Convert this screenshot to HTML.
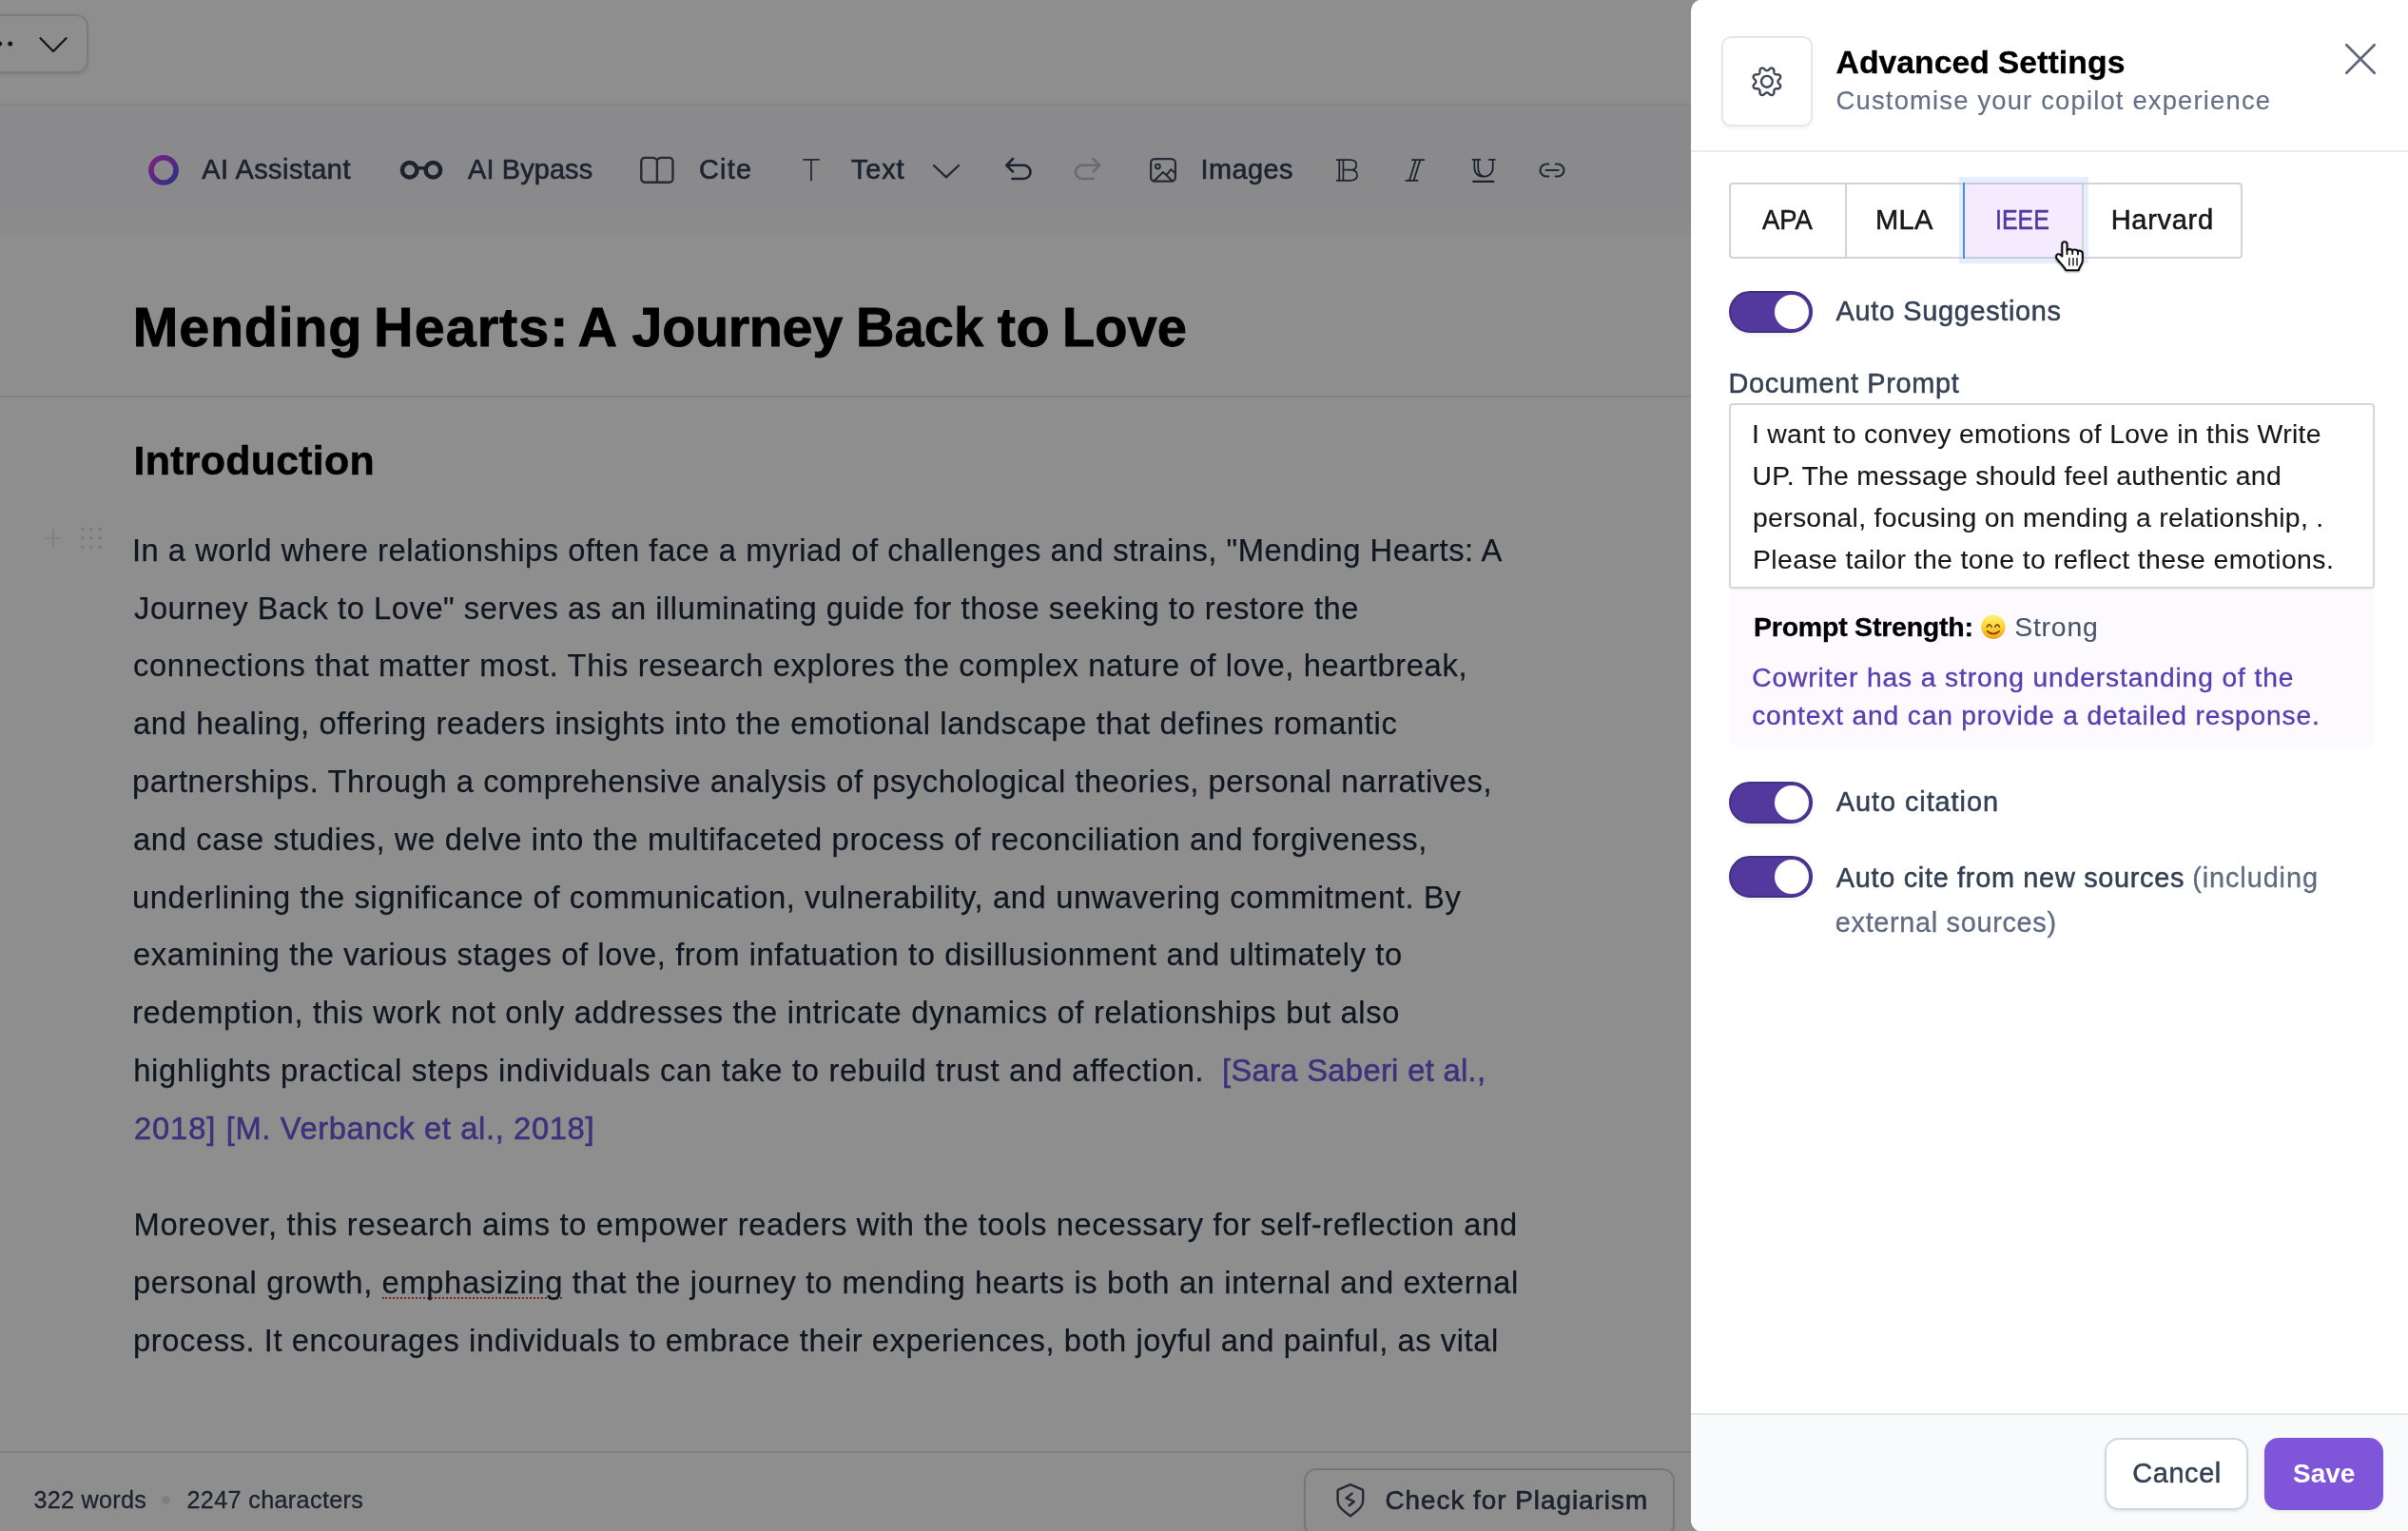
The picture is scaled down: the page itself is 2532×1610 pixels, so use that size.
<!DOCTYPE html>
<html><head><meta charset="utf-8"><title>Advanced Settings</title>
<style>
html,body{margin:0;padding:0;overflow:hidden;}
body{width:2532px;height:1610px;overflow:hidden;position:relative;background:#fff;font-family:"Liberation Sans",sans-serif;}
.abs{position:absolute;}
.t{position:absolute;white-space:pre;line-height:1;}
#left,#pin{will-change:transform;}
#left{position:absolute;left:0;top:0;width:2532px;height:1610px;overflow:hidden;background:#fff;}
#ov{position:absolute;left:0;top:0;width:2532px;height:1610px;background:rgba(0,0,0,0.443);}
#panel{position:absolute;left:1778px;top:-1px;width:754px;height:1612px;background:#fff;border-radius:13px 0 0 13px;overflow:hidden;}
#pin{position:absolute;left:-1778px;top:1px;width:2532px;height:1610px;}
svg{position:absolute;left:0;top:0;overflow:visible;}
#root{position:absolute;left:0;top:0;width:2532px;height:1610px;overflow:hidden;}
</style></head><body>
<div id="root">
<div id="left">

<div class="abs" style="left:0;top:110.5px;width:2532px;height:137.5px;background:linear-gradient(#f8f8fb 0,#f8f8fb 70%,#f9f9fa 100%);"></div>
<div class="abs" style="left:0;top:108.5px;width:2532px;height:2px;background:#f0f1f3;"></div>
<div class="abs" style="left:-20px;top:15px;width:108.5px;height:57.6px;border:2px solid #dcdfe4;border-radius:13px;box-shadow:0 2px 3px rgba(16,24,40,.10);background:#fff;"></div>
<div class="abs" style="left:0;top:416px;width:2532px;height:2px;background:#e8e9ec;"></div>
<div class="abs" style="left:0;top:1526px;width:2532px;height:2px;background:#e8e9ec;"></div>
<div class="abs" style="left:1370.6px;top:1544px;width:386px;height:68px;border:2px solid #d3d6dc;border-radius:13px;box-shadow:0 2px 3px rgba(16,24,40,.08);"></div>
<div class="abs" style="left:170px;top:1573.3px;width:9px;height:9px;border-radius:50%;background:#e2e5ea;"></div>
<div class="abs" style="left:402px;top:1364.2px;width:189px;height:0;border-top:2.4px dotted #e5484d;"></div>
<svg width="2532" height="1610" viewBox="0 0 2532 1610" fill="none" stroke-linecap="round" stroke-linejoin="round">
<defs><linearGradient id="aig" x1="0" y1="0" x2="1" y2="1"><stop offset="0" stop-color="#e23be8"/><stop offset="1" stop-color="#4f5bea"/></linearGradient></defs>
<!-- dropdown dots + chevron -->
<circle cx="-0.3" cy="45.9" r="2.5" fill="#1d2939"/><circle cx="10.7" cy="45.9" r="2.5" fill="#1d2939"/>
<path d="M42.5 40.3 L56 54 L69.5 40.3" stroke="#1d2939" stroke-width="2.3"/>
<!-- AI assistant ring -->
<circle cx="172" cy="178.9" r="13.1" stroke="url(#aig)" stroke-width="5.6"/>
<!-- glasses -->
<g stroke="#344054" stroke-width="4.5"><circle cx="430.7" cy="178.8" r="7.75"/><circle cx="455.4" cy="178.8" r="7.75"/><path d="M439 176.7 H447" stroke-width="3.4"/></g>
<!-- book -->
<g stroke="#414b5c" stroke-width="2.35"><path d="M690.9 169.6 C690.9 167.2 688.6 165.9 686.4 165.9 H678 a3.7 3.7 0 0 0 -3.7 3.7 V188 a3.7 3.7 0 0 0 3.7 3.7 H703.8 a3.7 3.7 0 0 0 3.7 -3.7 V169.6 a3.7 3.7 0 0 0 -3.7 -3.7 H695.4 C693.2 165.9 690.9 167.2 690.9 169.6 V191.7"/></g>
<!-- T -->
<path d="M845 167.9 H861 M853 167.9 V189.6" stroke="#414b5c" stroke-width="1.8"/>
<!-- text chevron -->
<path d="M982 174 L995 186.4 L1008 174" stroke="#414b5c" stroke-width="2.4"/>
<!-- undo -->
<path d="M1065 167 L1058.3 173.8 L1065 180.5 M1058.8 173.8 H1076.4 a7.1 7.1 0 0 1 0 14.2 H1064.4" stroke="#344054" stroke-width="2.6"/>
<!-- redo -->
<path d="M1149.5 167 L1156.2 173.8 L1149.5 180.5 M1155.7 173.8 H1138.1 a7.1 7.1 0 0 0 0 14.2 H1149.6" stroke="#bcc1cc" stroke-width="2.6"/>
<!-- image -->
<g stroke="#414b5c" stroke-width="2.2"><rect x="1210.1" y="167.1" width="25.8" height="23.6" rx="4.2"/><circle cx="1217.4" cy="175.1" r="2.45" stroke-width="2"/><path d="M1213.6 190 L1223 180.9 L1232 189.4 M1226.6 184.2 L1231.3 178.2 L1236 182.2" stroke-width="2.1"/></g>
<!-- B -->
<g stroke="#344054" stroke-width="1.75"><path d="M1405.6 168.1 H1419.5 c4.3 0 6.8 2.1 6.8 5.3 c0 3.2 -2.5 5.3 -6.8 5.3 H1412.4 M1419.5 178.7 c4.8 0 7.6 2.2 7.6 5.6 c0 3.4 -2.8 5.6 -7.6 5.6 H1405.6 M1408.3 168.1 V189.9 M1412.4 168.1 V189.9"/></g>
<!-- I -->
<g stroke="#344054" stroke-width="1.8"><path d="M1484.9 168.1 H1497.4 M1478.2 189.8 H1490.7 M1488.8 168.1 L1482 189.8 M1493.3 168.1 L1486.6 189.8"/></g>
<!-- U -->
<g stroke="#344054" stroke-width="1.75"><path d="M1548.5 167.9 H1556.4 M1565.6 167.9 H1571.8 M1550.4 167.9 V176.5 c0 5.6 3.8 9.3 9.5 9.3 c5.8 0 9.8 -3.7 9.8 -9.3 V167.9 M1554.2 167.9 V176 c0 5.2 2.2 8.8 6 9.7"/><path d="M1549.2 190.8 H1570.4" stroke-width="2.2"/></g>
<!-- link -->
<g stroke="#414b5c" stroke-width="2.2"><path d="M1628.2 172.5 h-2.2 a6.5 6.5 0 0 0 0 13 h2.2 M1635.8 172.5 h2.2 a6.5 6.5 0 0 1 0 13 h-2.2 M1625.6 179 H1638.6"/></g>
<!-- plus + grid -->
<path d="M47.6 566 H64.2 M55.9 556.6 V575.4" stroke="#dfe2e7" stroke-width="1.7" stroke-linecap="butt"/>
<g fill="#d9dce2"><circle cx="86.7" cy="556.5" r="1.7"/><circle cx="86.7" cy="566" r="1.7"/><circle cx="86.7" cy="575.5" r="1.7"/><circle cx="95.9" cy="556.5" r="1.7"/><circle cx="95.9" cy="566" r="1.7"/><circle cx="95.9" cy="575.5" r="1.7"/><circle cx="105.2" cy="556.5" r="1.7"/><circle cx="105.2" cy="566" r="1.7"/><circle cx="105.2" cy="575.5" r="1.7"/></g>
<!-- shield -->
<g stroke="#414b5c" stroke-width="2.4"><path d="M1419.9 1561.2 L1432.2 1566.3 a1.8 1.8 0 0 1 1 1.6 V1578 c0 5.6 -3.4 9.2 -13.3 16.3 c-9.9 -7.1 -13.3 -10.7 -13.3 -16.3 V1567.9 a1.8 1.8 0 0 1 1 -1.6 Z"/><path d="M1421.6 1570.6 L1415.6 1575.4 L1423.9 1579 L1418.6 1583.3"/></g>
</svg>

<span class="t" style="left:212.30px;top:164.14px;font-size:28.9px;letter-spacing:0.472px;color:#344054;-webkit-text-stroke:0.6px #344054;">AI Assistant</span>
<span class="t" style="left:492.00px;top:164.14px;font-size:28.9px;letter-spacing:0.135px;color:#344054;-webkit-text-stroke:0.6px #344054;">AI Bypass</span>
<span class="t" style="left:735.00px;top:164.14px;font-size:28.9px;letter-spacing:1.230px;color:#344054;-webkit-text-stroke:0.6px #344054;">Cite</span>
<span class="t" style="left:895.00px;top:164.14px;font-size:28.9px;letter-spacing:0.814px;color:#344054;-webkit-text-stroke:0.6px #344054;">Text</span>
<span class="t" style="left:1262.40px;top:164.14px;font-size:28.9px;letter-spacing:0.461px;color:#344054;-webkit-text-stroke:0.6px #344054;">Images</span>
<span class="t" style="left:139.50px;top:316.24px;font-size:57.6px;letter-spacing:0.692px;color:#000;font-weight:700;-webkit-text-stroke:0.8px #000;">Mending</span>
<span class="t" style="left:393.10px;top:316.24px;font-size:57.6px;letter-spacing:0.970px;color:#000;font-weight:700;-webkit-text-stroke:0.8px #000;">Hearts:</span>
<span class="t" style="left:607.40px;top:316.24px;font-size:57.6px;letter-spacing:0.000px;color:#000;font-weight:700;-webkit-text-stroke:0.8px #000;">A</span>
<span class="t" style="left:664.50px;top:316.24px;font-size:57.6px;letter-spacing:-0.386px;color:#000;font-weight:700;-webkit-text-stroke:0.8px #000;">Journey</span>
<span class="t" style="left:899.90px;top:316.24px;font-size:57.6px;color:#000;transform-origin:0 50%;transform:scaleX(0.9738);font-weight:700;-webkit-text-stroke:0.8px #000;">Back</span>
<span class="t" style="left:1048.70px;top:316.24px;font-size:57.6px;letter-spacing:0.621px;color:#000;font-weight:700;-webkit-text-stroke:0.8px #000;">to</span>
<span class="t" style="left:1116.70px;top:316.24px;font-size:57.6px;color:#000;transform-origin:0 50%;transform:scaleX(0.9748);font-weight:700;-webkit-text-stroke:0.8px #000;">Love</span>
<span class="t" style="left:140.50px;top:462.99px;font-size:42.9px;letter-spacing:0.278px;color:#000;font-weight:700;-webkit-text-stroke:0.5px #000;">Introduction</span>
<span class="t" style="left:138.90px;top:562.92px;font-size:32.7px;letter-spacing:0.543px;color:#1d2939;-webkit-text-stroke:0.25px #1d2939;">In a world where relationships often face a myriad of challenges and strains, "Mending Hearts: A</span>
<span class="t" style="left:141.00px;top:623.70px;font-size:32.7px;letter-spacing:0.538px;color:#1d2939;-webkit-text-stroke:0.25px #1d2939;">Journey Back to Love" serves as an illuminating guide for those seeking to restore the</span>
<span class="t" style="left:140.00px;top:684.48px;font-size:32.7px;letter-spacing:0.644px;color:#1d2939;-webkit-text-stroke:0.25px #1d2939;">connections that matter most. This research explores the complex nature of love, heartbreak,</span>
<span class="t" style="left:140.00px;top:745.26px;font-size:32.7px;letter-spacing:0.631px;color:#1d2939;-webkit-text-stroke:0.25px #1d2939;">and healing, offering readers insights into the emotional landscape that defines romantic</span>
<span class="t" style="left:139.00px;top:806.04px;font-size:32.7px;letter-spacing:0.568px;color:#1d2939;-webkit-text-stroke:0.25px #1d2939;">partnerships. Through a comprehensive analysis of psychological theories, personal narratives,</span>
<span class="t" style="left:140.00px;top:866.82px;font-size:32.7px;letter-spacing:0.640px;color:#1d2939;-webkit-text-stroke:0.25px #1d2939;">and case studies, we delve into the multifaceted process of reconciliation and forgiveness,</span>
<span class="t" style="left:139.00px;top:927.60px;font-size:32.7px;letter-spacing:0.628px;color:#1d2939;-webkit-text-stroke:0.25px #1d2939;">underlining the significance of communication, vulnerability, and unwavering commitment. By</span>
<span class="t" style="left:140.00px;top:988.38px;font-size:32.7px;letter-spacing:0.612px;color:#1d2939;-webkit-text-stroke:0.25px #1d2939;">examining the various stages of love, from infatuation to disillusionment and ultimately to</span>
<span class="t" style="left:139.00px;top:1049.16px;font-size:32.7px;letter-spacing:0.689px;color:#1d2939;-webkit-text-stroke:0.25px #1d2939;">redemption, this work not only addresses the intricate dynamics of relationships but also</span>
<span class="t" style="left:140.20px;top:1109.94px;font-size:32.7px;letter-spacing:0.692px;color:#1d2939;-webkit-text-stroke:0.25px #1d2939;">highlights practical steps individuals can take to rebuild trust and affection.</span>
<span class="t" style="left:1285.00px;top:1109.94px;font-size:32.7px;letter-spacing:0.335px;color:#7059de;-webkit-text-stroke:0.6px #7059de;">[Sara Saberi et al.,</span>
<span class="t" style="left:141.00px;top:1170.72px;font-size:32.7px;letter-spacing:0.871px;color:#7059de;-webkit-text-stroke:0.6px #7059de;">2018]</span>
<span class="t" style="left:237.70px;top:1170.72px;font-size:32.7px;letter-spacing:0.644px;color:#7059de;-webkit-text-stroke:0.6px #7059de;">[M. Verbanck et al., 2018]</span>
<span class="t" style="left:140.50px;top:1272.32px;font-size:32.7px;letter-spacing:0.664px;color:#1d2939;-webkit-text-stroke:0.25px #1d2939;">Moreover, this research aims to empower readers with the tools necessary for self-reflection and</span>
<span class="t" style="left:140.00px;top:1333.10px;font-size:32.7px;letter-spacing:0.639px;color:#1d2939;-webkit-text-stroke:0.25px #1d2939;">personal growth, emphasizing that the journey to mending hearts is both an internal and external</span>
<span class="t" style="left:140.00px;top:1393.88px;font-size:32.7px;letter-spacing:0.579px;color:#1d2939;-webkit-text-stroke:0.25px #1d2939;">process. It encourages individuals to embrace their experiences, both joyful and painful, as vital</span>
<span class="t" style="left:35.50px;top:1565.07px;font-size:25.2px;letter-spacing:0.273px;color:#344054;-webkit-text-stroke:0.3px #344054;">322 words</span>
<span class="t" style="left:196.50px;top:1565.07px;font-size:25.2px;letter-spacing:0.341px;color:#344054;-webkit-text-stroke:0.3px #344054;">2247 characters</span>
<span class="t" style="left:1456.50px;top:1563.77px;font-size:27.8px;letter-spacing:1.007px;color:#344054;-webkit-text-stroke:0.65px #344054;">Check for Plagiarism</span>
</div>
<div id="ov"></div>
<div id="panel"><div id="pin">

<div class="abs" style="left:1810.4px;top:38.3px;width:91.2px;height:91.2px;border:2px solid #e6e7ea;border-radius:10px;box-shadow:0 2px 4px rgba(16,24,40,.06);"></div>
<div class="abs" style="left:1778px;top:157.7px;width:760px;height:2px;background:#eaecf0;"></div>
<!-- tabs -->
<div class="abs" style="left:2060.4px;top:186.1px;width:135.4px;height:91.3px;background:#e4eefc;"></div>
<div class="abs" style="left:1818.4px;top:192.3px;width:535.9px;height:75.4px;border:2px solid #d2d4d8;border-radius:4px;"></div>
<div class="abs" style="left:2066px;top:194px;width:122.6px;height:76px;background:#f4ebff;"></div>
<div class="abs" style="left:2064px;top:192px;width:2px;height:80px;background:#4a90e2;"></div>
<div class="abs" style="left:2066px;top:192px;width:124px;height:2px;background:#c9cbdb;"></div>
<div class="abs" style="left:2066px;top:270px;width:124px;height:2px;background:#c9cbdb;"></div>
<div class="abs" style="left:1940.2px;top:194px;width:2px;height:76px;background:#d2d4d8;"></div>
<div class="abs" style="left:2188.6px;top:194px;width:2px;height:76px;background:#d2d4d8;"></div>
<div class="abs" style="left:1818.1px;top:305.9px;width:83.7px;height:40px;border:2px solid #42307d;border-radius:24px;background:#53389e;box-shadow:0 2px 4px rgba(16,24,40,.08);"></div><div class="abs" style="left:1865.6px;top:309.7px;width:36.4px;height:36.4px;border-radius:50%;background:#fff;"></div><div class="abs" style="left:1818.1px;top:822px;width:83.7px;height:40px;border:2px solid #42307d;border-radius:24px;background:#53389e;box-shadow:0 2px 4px rgba(16,24,40,.08);"></div><div class="abs" style="left:1865.6px;top:825.8px;width:36.4px;height:36.4px;border-radius:50%;background:#fff;"></div><div class="abs" style="left:1818.1px;top:900.2px;width:83.7px;height:40px;border:2px solid #42307d;border-radius:24px;background:#53389e;box-shadow:0 2px 4px rgba(16,24,40,.08);"></div><div class="abs" style="left:1865.6px;top:904.0px;width:36.4px;height:36.4px;border-radius:50%;background:#fff;"></div>
<!-- textarea -->
<div class="abs" style="left:1818.7px;top:619px;width:678.7px;height:166.9px;background:#fcfaff;border-radius:0 0 8px 8px;"></div>
<div class="abs" style="left:1818px;top:424.2px;width:675.4px;height:191px;border:2px solid #d5d6d9;border-radius:4px;background:#fff;box-shadow:0 1px 2px rgba(16,24,40,.05);"></div>
<!-- footer -->
<div class="abs" style="left:1778px;top:1486px;width:760px;height:2px;background:#e4e7ec;"></div>
<div class="abs" style="left:1778px;top:1488px;width:760px;height:130px;background:#f9fafb;"></div>
<div class="abs" style="left:2212.6px;top:1512.3px;width:147.6px;height:72.2px;border:2px solid #d5d7dc;border-radius:15px;background:#fff;box-shadow:0 2px 3px rgba(16,24,40,.08);"></div>
<div class="abs" style="left:2380.8px;top:1512px;width:125.2px;height:75.9px;border-radius:15px;background:#7f56d9;box-shadow:0 2px 3px rgba(16,24,40,.08);"></div>
<svg width="2532" height="1610" viewBox="0 0 2532 1610" fill="none" stroke-linecap="round" stroke-linejoin="round">
<defs><linearGradient id="emg" x1="0" y1="0" x2="0" y2="1"><stop offset="0" stop-color="#fff27a"/><stop offset="0.45" stop-color="#fdd835"/><stop offset="1" stop-color="#f59e1c"/></linearGradient></defs>
<path d="M1869.50,85.80 L1869.51,86.09 L1869.56,86.37 L1869.64,86.67 L1869.78,86.97 L1869.98,87.29 L1870.27,87.63 L1870.63,88.01 L1871.04,88.41 L1871.44,88.84 L1871.77,89.27 L1872.00,89.70 L1872.12,90.12 L1872.17,90.51 L1872.14,90.90 L1872.07,91.26 L1871.94,91.62 L1871.78,91.95 L1871.58,92.27 L1871.32,92.56 L1871.01,92.81 L1870.63,93.01 L1870.16,93.15 L1869.62,93.22 L1869.04,93.24 L1868.47,93.24 L1867.94,93.25 L1867.50,93.29 L1867.13,93.37 L1866.81,93.49 L1866.55,93.64 L1866.31,93.81 L1866.10,94.00 L1865.91,94.21 L1865.74,94.45 L1865.59,94.71 L1865.47,95.03 L1865.39,95.40 L1865.35,95.84 L1865.34,96.37 L1865.34,96.94 L1865.32,97.52 L1865.25,98.06 L1865.11,98.53 L1864.91,98.91 L1864.66,99.22 L1864.37,99.48 L1864.05,99.68 L1863.72,99.84 L1863.36,99.97 L1863.00,100.04 L1862.61,100.07 L1862.22,100.02 L1861.80,99.90 L1861.37,99.67 L1860.94,99.34 L1860.51,98.94 L1860.11,98.53 L1859.73,98.17 L1859.39,97.88 L1859.07,97.68 L1858.77,97.54 L1858.47,97.46 L1858.19,97.41 L1857.90,97.40 L1857.61,97.41 L1857.33,97.46 L1857.03,97.54 L1856.73,97.68 L1856.41,97.88 L1856.07,98.17 L1855.69,98.53 L1855.29,98.94 L1854.86,99.34 L1854.43,99.67 L1854.00,99.90 L1853.58,100.02 L1853.19,100.07 L1852.80,100.04 L1852.44,99.97 L1852.08,99.84 L1851.75,99.68 L1851.43,99.48 L1851.14,99.22 L1850.89,98.91 L1850.69,98.53 L1850.55,98.06 L1850.48,97.52 L1850.46,96.94 L1850.46,96.37 L1850.45,95.84 L1850.41,95.40 L1850.33,95.03 L1850.21,94.71 L1850.06,94.45 L1849.89,94.21 L1849.70,94.00 L1849.49,93.81 L1849.25,93.64 L1848.99,93.49 L1848.67,93.37 L1848.30,93.29 L1847.86,93.25 L1847.33,93.24 L1846.76,93.24 L1846.18,93.22 L1845.64,93.15 L1845.17,93.01 L1844.79,92.81 L1844.48,92.56 L1844.22,92.27 L1844.02,91.95 L1843.86,91.62 L1843.73,91.26 L1843.66,90.90 L1843.63,90.51 L1843.68,90.12 L1843.80,89.70 L1844.03,89.27 L1844.36,88.84 L1844.76,88.41 L1845.17,88.01 L1845.53,87.63 L1845.82,87.29 L1846.02,86.97 L1846.16,86.67 L1846.24,86.37 L1846.29,86.09 L1846.30,85.80 L1846.29,85.51 L1846.24,85.23 L1846.16,84.93 L1846.02,84.63 L1845.82,84.31 L1845.53,83.97 L1845.17,83.59 L1844.76,83.19 L1844.36,82.76 L1844.03,82.33 L1843.80,81.90 L1843.68,81.48 L1843.63,81.09 L1843.66,80.70 L1843.73,80.34 L1843.86,79.98 L1844.02,79.65 L1844.22,79.33 L1844.48,79.04 L1844.79,78.79 L1845.17,78.59 L1845.64,78.45 L1846.18,78.38 L1846.76,78.36 L1847.33,78.36 L1847.86,78.35 L1848.30,78.31 L1848.67,78.23 L1848.99,78.11 L1849.25,77.96 L1849.49,77.79 L1849.70,77.60 L1849.89,77.39 L1850.06,77.15 L1850.21,76.89 L1850.33,76.57 L1850.41,76.20 L1850.45,75.76 L1850.46,75.23 L1850.46,74.66 L1850.48,74.08 L1850.55,73.54 L1850.69,73.07 L1850.89,72.69 L1851.14,72.38 L1851.43,72.12 L1851.75,71.92 L1852.08,71.76 L1852.44,71.63 L1852.80,71.56 L1853.19,71.53 L1853.58,71.58 L1854.00,71.70 L1854.43,71.93 L1854.86,72.26 L1855.29,72.66 L1855.69,73.07 L1856.07,73.43 L1856.41,73.72 L1856.73,73.92 L1857.03,74.06 L1857.33,74.14 L1857.61,74.19 L1857.90,74.20 L1858.19,74.19 L1858.47,74.14 L1858.77,74.06 L1859.07,73.92 L1859.39,73.72 L1859.73,73.43 L1860.11,73.07 L1860.51,72.66 L1860.94,72.26 L1861.37,71.93 L1861.80,71.70 L1862.22,71.58 L1862.61,71.53 L1863.00,71.56 L1863.36,71.63 L1863.72,71.76 L1864.05,71.92 L1864.37,72.12 L1864.66,72.38 L1864.91,72.69 L1865.11,73.07 L1865.25,73.54 L1865.32,74.08 L1865.34,74.66 L1865.34,75.23 L1865.35,75.76 L1865.39,76.20 L1865.47,76.57 L1865.59,76.89 L1865.74,77.15 L1865.91,77.39 L1866.10,77.60 L1866.31,77.79 L1866.55,77.96 L1866.81,78.11 L1867.13,78.23 L1867.50,78.31 L1867.94,78.35 L1868.47,78.36 L1869.04,78.36 L1869.62,78.38 L1870.16,78.45 L1870.63,78.59 L1871.01,78.79 L1871.32,79.04 L1871.58,79.33 L1871.78,79.65 L1871.94,79.98 L1872.07,80.34 L1872.14,80.70 L1872.17,81.09 L1872.12,81.48 L1872.00,81.90 L1871.77,82.33 L1871.44,82.76 L1871.04,83.19 L1870.63,83.59 L1870.27,83.97 L1869.98,84.31 L1869.78,84.63 L1869.64,84.93 L1869.56,85.23 L1869.51,85.51Z" stroke="#3f4654" stroke-width="2.4"/>
<circle cx="1857.9" cy="85.8" r="5.9" stroke="#3f4654" stroke-width="2.4"/>
<path d="M2467.3 47.3 L2496.7 76.7 M2496.7 47.3 L2467.3 76.7" stroke="#5f677a" stroke-width="2.7"/>
<circle cx="2095.9" cy="659.2" r="12.7" fill="url(#emg)"/>
<g stroke="#6b3d00" stroke-width="1.6"><path d="M2089.4 659.2 q2.3 -4.8 4.6 0 M2097.8 659.2 q2.3 -4.8 4.6 0"/><path d="M2089.6 663.8 q6.3 5.4 12.6 0"/></g>
</svg>

<span class="t" style="left:1930.60px;top:49.27px;font-size:33.7px;letter-spacing:0.025px;color:#000;font-weight:700;-webkit-text-stroke:0.35px #000;">Advanced</span>
<span class="t" style="left:2100.70px;top:49.27px;font-size:33.7px;letter-spacing:0.135px;color:#000;font-weight:700;-webkit-text-stroke:0.35px #000;">Settings</span>
<span class="t" style="left:1930.60px;top:91.81px;font-size:27.4px;letter-spacing:1.180px;color:#667085;-webkit-text-stroke:0.15px #667085;">Customise your copilot experience</span>
<span class="t" style="left:1853.20px;top:216.87px;font-size:29.1px;color:#18181b;transform-origin:0 50%;transform:scaleX(0.9426);-webkit-text-stroke:0.55px #18181b;">APA</span>
<span class="t" style="left:1971.90px;top:216.87px;font-size:29.1px;letter-spacing:0.342px;color:#18181b;-webkit-text-stroke:0.55px #18181b;">MLA</span>
<span class="t" style="left:2097.90px;top:216.87px;font-size:29.1px;color:#53389e;transform-origin:0 50%;transform:scaleX(0.8561);-webkit-text-stroke:0.55px #53389e;">IEEE</span>
<span class="t" style="left:2219.70px;top:216.87px;font-size:29.1px;letter-spacing:0.651px;color:#18181b;-webkit-text-stroke:0.55px #18181b;">Harvard</span>
<span class="t" style="left:1930.60px;top:313.14px;font-size:28.9px;letter-spacing:0.658px;color:#344054;-webkit-text-stroke:0.5px #344054;">Auto Suggestions</span>
<span class="t" style="left:1817.50px;top:389.44px;font-size:28.9px;letter-spacing:0.679px;color:#344054;-webkit-text-stroke:0.5px #344054;">Document Prompt</span>
<span class="t" style="left:1841.90px;top:441.76px;font-size:28.4px;letter-spacing:0.297px;color:#18181b;-webkit-text-stroke:0.1px #18181b;">I want to convey emotions of Love in this Write</span>
<span class="t" style="left:1842.50px;top:485.66px;font-size:28.4px;letter-spacing:0.239px;color:#18181b;-webkit-text-stroke:0.1px #18181b;">UP. The message should feel authentic and</span>
<span class="t" style="left:1843.00px;top:529.96px;font-size:28.4px;letter-spacing:0.284px;color:#18181b;-webkit-text-stroke:0.1px #18181b;">personal, focusing on mending a relationship, .</span>
<span class="t" style="left:1843.00px;top:573.86px;font-size:28.4px;letter-spacing:0.395px;color:#18181b;-webkit-text-stroke:0.1px #18181b;">Please tailor the tone to reflect these emotions.</span>
<span class="t" style="left:1844.00px;top:645.27px;font-size:28.5px;letter-spacing:-0.222px;color:#000;font-weight:700;-webkit-text-stroke:0.3px #000;">Prompt Strength:</span>
<span class="t" style="left:2118.20px;top:645.36px;font-size:28.4px;letter-spacing:0.789px;color:#475467;-webkit-text-stroke:0.1px #475467;">Strong</span>
<span class="t" style="left:1842.20px;top:697.83px;font-size:28.2px;letter-spacing:0.891px;color:#593eb0;-webkit-text-stroke:0.35px #593eb0;">Cowriter has a strong understanding of the</span>
<span class="t" style="left:1842.20px;top:737.73px;font-size:28.2px;letter-spacing:0.829px;color:#593eb0;-webkit-text-stroke:0.35px #593eb0;">context and can provide a detailed response.</span>
<span class="t" style="left:1930.80px;top:828.74px;font-size:28.9px;letter-spacing:0.931px;color:#344054;-webkit-text-stroke:0.5px #344054;">Auto citation</span>
<span class="t" style="left:1930.80px;top:908.94px;font-size:28.9px;letter-spacing:0.688px;color:#344054;-webkit-text-stroke:0.5px #344054;">Auto cite from new sources</span>
<span class="t" style="left:2305.20px;top:908.94px;font-size:28.9px;letter-spacing:0.901px;color:#606b80;-webkit-text-stroke:0.3px #606b80;">(including</span>
<span class="t" style="left:1929.80px;top:956.04px;font-size:28.9px;letter-spacing:0.664px;color:#606b80;-webkit-text-stroke:0.3px #606b80;">external sources)</span>
<span class="t" style="left:2242.30px;top:1535.14px;font-size:28.9px;letter-spacing:0.598px;color:#344054;-webkit-text-stroke:0.5px #344054;">Cancel</span>
<span class="t" style="left:2411.00px;top:1535.47px;font-size:28.5px;color:#fff;transform-origin:0 50%;transform:scaleX(0.9816);font-weight:700;">Save</span>
</div></div>

<svg width="2532" height="1610" viewBox="0 0 2532 1610" style="filter:drop-shadow(0 1px 1.2px rgba(0,0,0,.35));">
<path d="M2168.3 269.6 V256.8 a2.6 2.6 0 0 1 5.2 0 V263.4 c0.3 -1.8 5.2 -1.8 5.5 0.3 c0.3 -1.8 5.3 -1.6 5.6 0.6 c0.4 -1.2 5.2 -1 5.2 2.4 V274 c0 4 -3.3 6 -4.2 10.2 H2172.2 c-1.2 -3.2 -6.2 -7.7 -9.2 -11.7 c-2 -2.5 -0.8 -5.7 2 -5.2 c1.5 0.3 2.5 1.5 3.3 2.3 Z" fill="#fff" stroke="#111" stroke-width="2.1" stroke-linejoin="round"/>
<path d="M2173.5 263 V267.2 M2179.2 263.6 V267 M2184.9 264.2 V267.4" stroke="#111" stroke-width="1.9" stroke-linecap="round"/>
<path d="M2175.8 271.6 V279 M2180 271.6 V279 M2184 271.6 V279" stroke="#222" stroke-width="1.5" stroke-linecap="round"/>
</svg>

</div>
</body></html>
